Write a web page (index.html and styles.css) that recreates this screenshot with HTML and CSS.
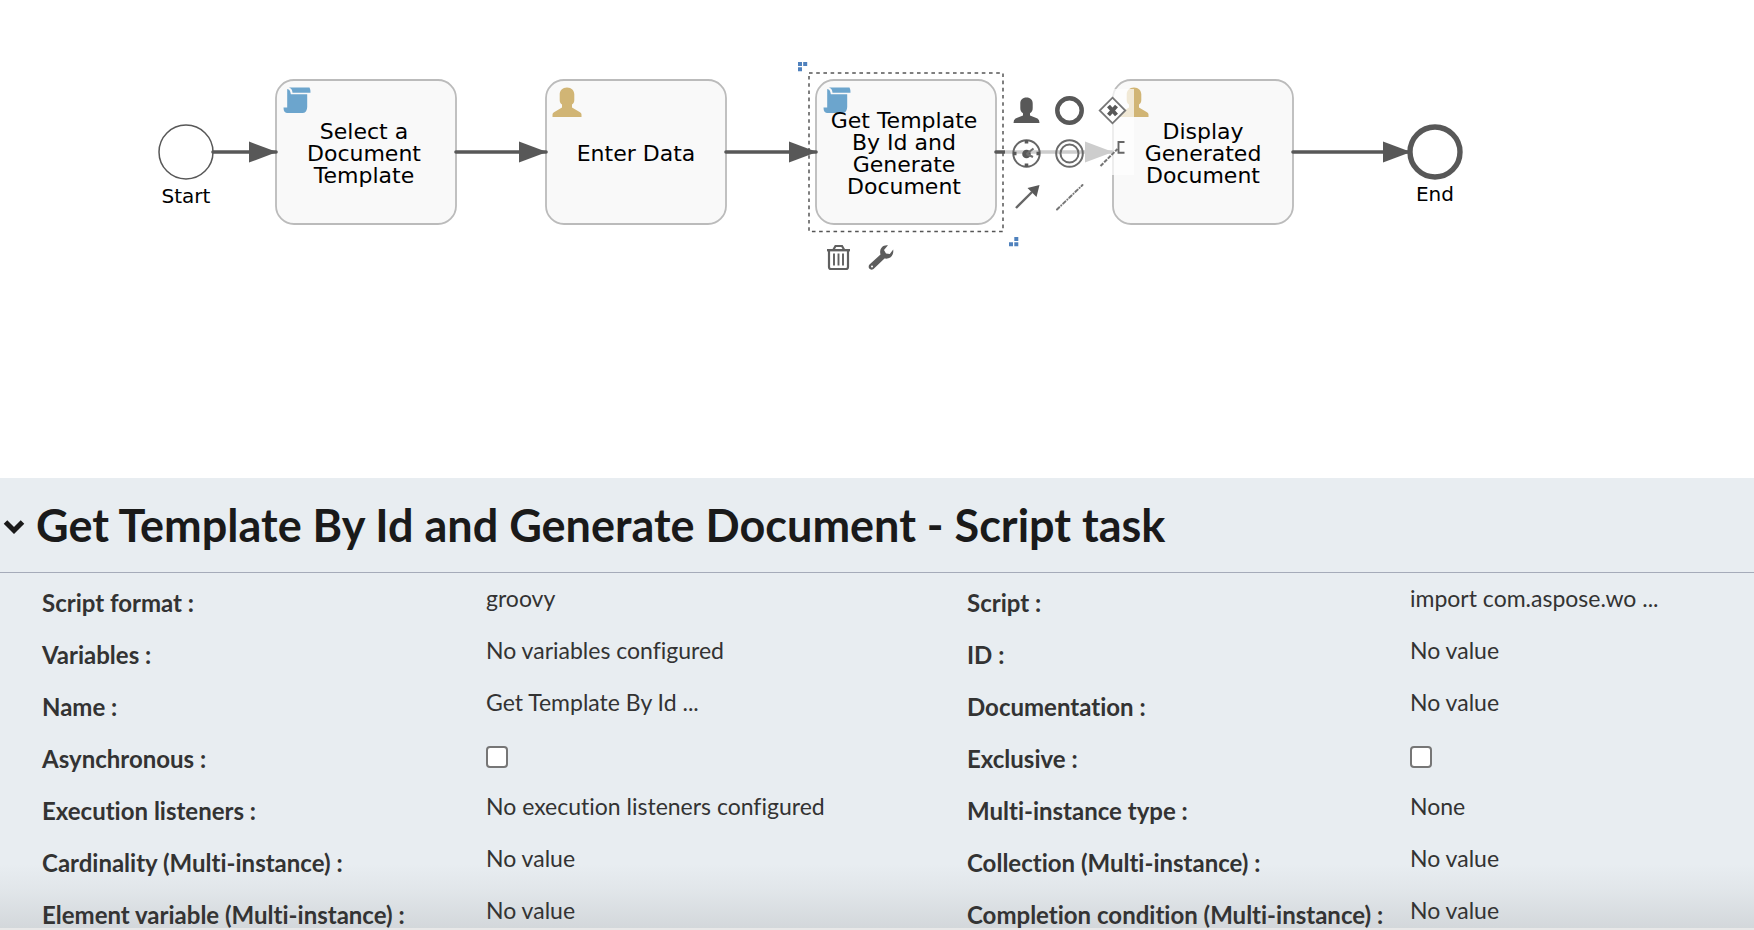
FILE: index.html
```
<!DOCTYPE html>
<html lang="en">
<head>
<meta charset="utf-8">
<title>Process editor</title>
<link rel="stylesheet" href="styles.css">
</head>
<body>
<main class="editor">
  <section class="canvas" aria-label="Process diagram">
    <svg class="shapes" width="1500" height="300" viewBox="0 0 1500 300" aria-hidden="true">
      <defs>
        <marker id="arrow" markerUnits="userSpaceOnUse" markerWidth="28" markerHeight="22" refX="27" refY="11" orient="auto">
          <path d="M0 0.5L28 11L0 21.5Z" fill="#585858"/>
        </marker>
        <symbol id="script" viewBox="0 0 28 27">
          <path d="M6 0.5H26.5Q27.600 2.500 27.500 5.800H9.500Q9.200 1.500 6 0.500Z"/>
          <path d="M4.200 2Q7.400 2.400 7.800 7.300H24.200V20Q24 25.500 20 26H4Q0.500 25.500 0.500 20.500H4.200Z"/>
        </symbol>
        <symbol id="user" viewBox="0 0 30 30">
          <path d="M15 0.500C19.500 0.500 22.300 3.600 22.300 7.500V13C22.300 15 21.500 16.600 20 17.400V20.500L28 25.200Q29.500 26 29.500 27.500V30H0.500V27.500Q0.500 26 2 25.200L10 20.500V17.400C8.500 16.600 7.700 15 7.700 13V7.500C7.700 3.600 10.500 0.500 15 0.500Z"/>
        </symbol>
      </defs>
      <circle cx="186" cy="152" r="27" fill="#fff" stroke="#585858" stroke-width="1.500"/>
      <g fill="#f9f9f9" stroke="#bbb" stroke-width="1.800">
        <rect x="276" y="80" width="180" height="144" rx="18"/>
        <rect x="546" y="80" width="180" height="144" rx="18"/>
        <rect x="816" y="80" width="180" height="144" rx="18"/>
        <rect x="1113" y="80" width="180" height="144" rx="18"/>
      </g>
      <g fill="#6ca5cd">
        <use href="#script" x="283" y="87" width="28" height="27"/>
        <use href="#script" x="823" y="87" width="28" height="27"/>
      </g>
      <g fill="#d1b575">
        <use href="#user" x="552" y="87" width="30" height="30"/>
        <use href="#user" x="1119" y="87" width="30" height="30"/>
      </g>
      <g stroke="#585858" stroke-width="3.600" stroke-linecap="round" fill="none">
        <path d="M213 152H276" marker-end="url(#arrow)"/>
        <path d="M456 152H546" marker-end="url(#arrow)"/>
        <path d="M726 152H816" marker-end="url(#arrow)"/>
        <path d="M996 152H1112" marker-end="url(#arrow)"/>
        <path d="M1293 152H1410" marker-end="url(#arrow)"/>
      </g>
      <circle cx="1435" cy="152" r="25" fill="#fff" stroke="#585858" stroke-width="5.400"/>
      <rect x="809" y="73" width="194" height="158.500" fill="none" stroke="#555" stroke-width="1.500" stroke-dasharray="3.600 3.600"/>
      <path fill="#4f81bd" d="M798 62h4v4h-4zM803.200 62h4v4h-4zM798 67.200h4v4h-4zM1014.300 237h4v4h-4zM1009 242.300h4v4h-4zM1014.300 242.300h4v4h-4z"/>
    </svg>

    <div class="task task-select">Select a<br>Document<br>Template</div>
    <div class="task task-enter">Enter Data</div>
    <div class="task task-generate">Get Template<br>By Id and<br>Generate<br>Document</div>
    <div class="task task-display">Display<br>Generated<br>Document</div>
    <div class="event event-start">Start</div>
    <div class="event event-end">End</div>

    <div class="quick-shapes">
      <button class="tool" type="button" aria-label="User task"><svg viewBox="0 0 43 43"><path fill="#585858" d="M21.500 8.500C25.500 8.500 27.700 11 27.700 14.500V19C27.700 21.500 27 23 25 24.300V26.500L32.500 29.500Q34.500 30.500 34.500 34H8.500Q8.500 30.500 10.500 29.500L18 26.500V24.300C16 23 15.300 21.500 15.300 19V14.500C15.300 11 17.500 8.500 21.500 8.500Z"/></svg></button>
      <button class="tool" type="button" aria-label="End event"><svg viewBox="0 0 43 43"><circle cx="21.500" cy="21.500" r="12.200" fill="none" stroke="#585858" stroke-width="4.500"/></svg></button>
      <button class="tool" type="button" aria-label="Exclusive gateway"><svg viewBox="0 0 43 43"><path d="M21.500 8.700L34.300 21.500L21.500 34.300L8.700 21.500Z" fill="#fff" stroke="#777" stroke-width="1.800"/><path d="M17.500 17L25.500 26M25.500 17L17.500 26" stroke="#585858" stroke-width="4"/></svg></button>
      <button class="tool" type="button" aria-label="Intermediate timer event"><svg viewBox="0 0 43 43"><circle cx="21.500" cy="21.500" r="13.200" fill="none" stroke="#666" stroke-width="2"/><path d="M21.500 8v3.500M21.500 31.500v3.500M8 21.500h3.500M31.500 21.500h3.500" stroke="#585858" stroke-width="3.600"/><circle cx="21.500" cy="22" r="4.300" fill="#585858"/><path d="M21.500 22L28.500 16.500M21.500 22L28 25" stroke="#707070" stroke-width="2.200"/></svg></button>
      <button class="tool" type="button" aria-label="Intermediate event"><svg viewBox="0 0 43 43"><g fill="none" stroke="#6a6a6a" stroke-width="2"><circle cx="21.500" cy="21.500" r="13.300"/><circle cx="21.500" cy="21.500" r="9"/></g></svg></button>
      <button class="tool" type="button" aria-label="Text annotation"><svg viewBox="0 0 43 43"><path d="M9.500 34L26.500 17" stroke="#757575" stroke-width="2" stroke-dasharray="4 1.200"/><path d="M33.500 10H27.500V20.800H33.500" fill="none" stroke="#666" stroke-width="1.900"/></svg></button>
      <button class="tool tool-clear" type="button" aria-label="Sequence flow"><svg viewBox="0 0 43 43"><path d="M11 33L27 17" stroke="#666" stroke-width="2.400"/><path d="M34.500 10L31.500 22L22.500 13Z" fill="#585858"/></svg></button>
      <button class="tool tool-clear" type="button" aria-label="Association"><svg viewBox="0 0 43 43"><path d="M9 34.500L34.500 10" stroke="#757575" stroke-width="2" stroke-linecap="round" stroke-dasharray="3.200 2.600 .1 2.600"/></svg></button>
    </div>

    <div class="quick-actions">
      <button class="tool" type="button" aria-label="Delete"><svg viewBox="0 0 43 43"><g fill="none" stroke="#606060" stroke-width="2.200"><path d="M10 14.200H33" stroke-width="2.400"/><path d="M16.500 13.500L18.500 10H25L27 13.500"/><path d="M12 15V31Q12 33 14 33H29Q31 33 31 31V15"/><path d="M17 17.500V29.500M21.500 17.500V29.500M26 17.500V29.500" stroke-width="1.900"/></g></svg></button>
      <button class="tool" type="button" aria-label="Change shape type"><svg viewBox="1 0 43 43"><path fill="#5c5c5c" d="M29 9.300L25 14L27 17.500L30.800 18L34.200 13.500C35 19.500 31 23.500 25.500 22.500L14.500 33Q12 34.500 10.200 32.500Q9 30.500 10.500 28.500L21.500 18.500C20 13 23.500 8.500 29 9.300Z"/><circle cx="13" cy="30.500" r="1" fill="#fff"/></svg></button>
    </div>
  </section>

  <section class="panel" aria-labelledby="panel-title">
    <header class="panel-head">
      <button class="collapse" type="button" aria-label="Collapse properties"><svg viewBox="0 0 24 18"><path d="M3.500 4L12 12.500L20.500 4" fill="none" stroke="#1a1a1a" stroke-width="5"/></svg></button>
      <h1 class="title" id="panel-title">Get Template By Id and Generate Document - Script task</h1>
    </header>
    <dl class="props">
      <dt>Script format :</dt><dd>groovy</dd><dt>Script :</dt><dd>import com.aspose.wo ...</dd>
      <dt>Variables :</dt><dd>No variables configured</dd><dt>ID :</dt><dd>No value</dd>
      <dt>Name :</dt><dd>Get Template By Id ...</dd><dt>Documentation :</dt><dd>No value</dd>
      <dt><label for="async">Asynchronous :</label></dt><dd><input class="check" id="async" type="checkbox"></dd><dt><label for="exclusive">Exclusive :</label></dt><dd><input class="check" id="exclusive" type="checkbox"></dd>
      <dt>Execution listeners :</dt><dd>No execution listeners configured</dd><dt>Multi-instance type :</dt><dd>None</dd>
      <dt>Cardinality (Multi-instance) :</dt><dd>No value</dd><dt>Collection (Multi-instance) :</dt><dd>No value</dd>
      <dt>Element variable (Multi-instance) :</dt><dd>No value</dd><dt>Completion condition (Multi-instance) :</dt><dd>No value</dd>
    </dl>
  </section>
</main>
</body>
</html>
```
FILE: styles.css
```
* { box-sizing: border-box; }

body {
  margin: 0;
  background: #fff;
  color: #333;
  font-family: Lato, "Liberation Sans", sans-serif;
  font-variant-ligatures: none;
}

.editor {
  display: flex;
  flex-direction: column;
  height: 100vh;
  overflow: hidden;
}

/* Diagram canvas */
.canvas {
  position: relative;
  flex: 0 0 478px;
  overflow: hidden;
  font-family: Verdana, "DejaVu Sans", sans-serif;
  color: #000;
}

.shapes { display: block; }

.task {
  position: absolute;
  top: 82px;
  display: flex;
  align-items: center;
  justify-content: center;
  width: 180px;
  height: 144px;
  font-size: 22px;
  line-height: 22px;
  text-align: center;
}

.task-select { left: 274px; }
.task-enter { left: 546px; }
.task-generate { left: 814px; }
.task-display { left: 1113px; }

.event {
  position: absolute;
  width: 100px;
  font-size: 20px;
  line-height: 24px;
  text-align: center;
}

.event-start { left: 136px; top: 184px; }
.event-end { left: 1385px; top: 182px; }

.quick-shapes {
  position: absolute;
  left: 1005px;
  top: 89px;
  display: grid;
  grid-template-columns: repeat(3, 43px);
}

.quick-actions {
  position: absolute;
  left: 817px;
  top: 236px;
  display: flex;
}

.tool {
  width: 43px;
  height: 43px;
  padding: 0;
  border: 0;
  background: rgba(255, 255, 255, 0.7);
}

.tool-clear { background: none; }
.tool svg { display: block; width: 43px; height: 43px; }

/* Properties panel */
.panel {
  position: relative;
  flex: 1;
  min-height: 0;
  overflow: hidden;
  background: #e8edf1;
  border-bottom: 2px solid #e8e8e8;
}

.panel::after {
  content: "";
  position: absolute;
  inset: auto 0 0;
  height: 64px;
  background: linear-gradient(rgba(60, 60, 60, 0), rgba(60, 60, 60, 0.04) 40%, rgba(60, 60, 60, 0.12));
  pointer-events: none;
}

.panel-head {
  display: flex;
  align-items: center;
  gap: 10px;
  height: 95px;
  border-bottom: 1px solid #a5abb9;
}

.collapse {
  width: 26px;
  padding: 4px 0 0 2px;
  border: 0;
  background: none;
}

.collapse svg { display: block; width: 24px; height: 18px; }

.title {
  margin: 0;
  color: #1a1a1a;
  font-size: 45px;
  line-height: 56px;
  font-weight: 700;
  white-space: nowrap;
}

.props {
  display: grid;
  grid-template-columns: 444fr 481fr 443fr 344fr;
  grid-auto-rows: 52px;
  margin: 0;
  padding: 11px 0 0 42px;
  font-size: 24px;
  line-height: 28px;
}

.props dt { padding-top: 5px; font-weight: 700; white-space: nowrap; }
.props dd { margin: 0; font-size: 23px; white-space: nowrap; }

.check {
  display: block;
  appearance: none;
  width: 22px;
  height: 22px;
  margin: 6px 0 0;
  border: 2px solid #767676;
  border-radius: 4px;
  background: #fff;
}
```
